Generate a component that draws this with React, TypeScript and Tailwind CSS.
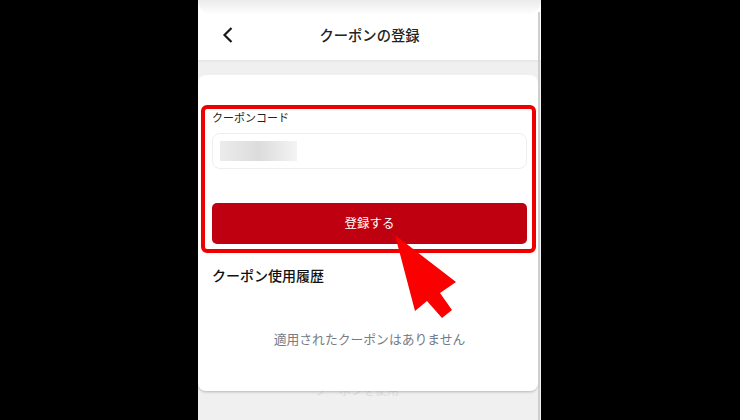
const jp = { fontFamily: '"Noto Sans CJK JP", "Noto Sans", sans-serif' };

export default function App() {
  return (
    <div style={jp} className="relative w-[740px] h-[420px] overflow-hidden bg-black">
      <div className="relative ml-[198px] w-[343px] h-[420px] flex flex-col bg-[#f0f0f0] overflow-hidden">
        <div className="absolute left-[117px] top-[381px] text-[12px] text-[#dddddd]">クーポンを使用</div>
        <div className="h-[60px] bg-white relative flex items-center justify-center shrink-0">
          <div className="absolute left-0 right-0 top-0 h-[15px] bg-gradient-to-b from-[#ebebeb] to-white rounded-b-[24px]" />
          <svg className="absolute left-[23px] top-[26px]" width="14" height="18" viewBox="0 0 14 18" fill="none">
            <path d="M10.5 2 L3.5 9 L10.5 16" stroke="#1a1a1a" strokeWidth="2.2" />
          </svg>
          <span className="text-[14.3px] font-medium text-[#222] mt-[9px]">クーポンの登録</span>
        </div>
        <div className="h-[2px] bg-[#e8e8e8] shrink-0" />
        <div className="h-[13px] shrink-0" />
        <div className="relative h-[316px] w-[340px] bg-white rounded-[8px] shadow-[0_2px_3px_-1px_rgba(0,0,0,0.25)] px-[14px] pt-[33px] flex flex-col shrink-0">
          <div className="text-[11px] leading-[18px] text-[#222]">クーポンコード</div>
          <div className="mt-[7px] h-[36px] w-[315px] rounded-[8px] border border-[#eeeeee] flex items-center px-[7px]">
            <div className="w-[77px] h-[20px] bg-gradient-to-r from-[#ececec] via-[#dcdcdc] to-[#f4f4f4]" />
          </div>
          <button className="mt-[34px] h-[41px] w-[315px] rounded-[5px] bg-[#bf0010] text-white text-[12.5px] font-normal flex items-center justify-center">
            登録する
          </button>
          <div className="mt-[20px] text-[14px] leading-[22px] font-medium text-[#111]">クーポン使用履歴</div>
          <div className="mt-[43px] pl-[3px] text-center text-[12.8px] leading-[20px] text-[#757c88]">適用されたクーポンはありません</div>
        </div>
        <div className="absolute right-[1px] top-[12px] bottom-0 w-[2px] bg-[#cfcfcf]" />
      </div>

      <div className="absolute left-[201px] top-[105px] w-[335px] h-[148px] border-[4px] border-[#ee0000] rounded-[6px]" />
      <svg className="absolute left-0 top-0" width="740" height="420" viewBox="0 0 740 420">
        <polygon points="395,235 456,282 440,293 452,310 442,318 427,301 415,311" fill="#fa0000" />
      </svg>
    </div>
  );
}
